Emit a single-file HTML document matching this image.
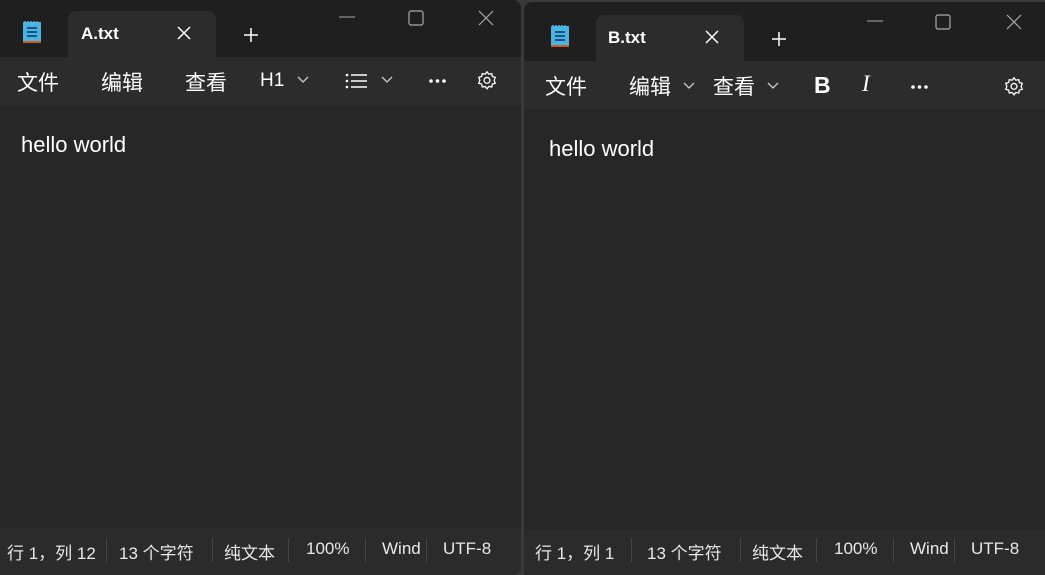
<!DOCTYPE html><html><head><meta charset="utf-8"><style>
*{margin:0;padding:0;box-sizing:border-box}
body{width:1045px;height:575px;background:#3a3a3a;position:relative;overflow:hidden;font-family:"Liberation Sans","Noto Sans CJK SC",sans-serif;color:#fff}
.win{position:absolute;background:#272727;overflow:hidden}
.title{position:absolute;left:0;top:0;right:0;background:#1f1f1f}
.tab{position:absolute;background:#2c2c2c;border-radius:8px 8px 0 0;font-weight:bold;font-size:17px}
.tb{position:absolute;left:0;right:0;background:#2c2c2c;font-size:21px}
.tb span{position:absolute;top:10px}
.st{position:absolute;left:0;right:0;bottom:0;height:47px;background:#2b2b2b;font-size:17px;color:#e8e8e8}
.st span{position:absolute;top:11px}
.st i{position:absolute;top:10px;width:1px;height:24px;background:#444}
.hw{position:absolute;font-size:22px}
svg{position:absolute}
</style></head><body>
<div class="win" style="left:0;top:0;width:521px;height:575px;border-radius:0 8px 8px 0">
 <div class="title" style="height:57px"></div>
 <svg style="left:22px;top:20px" width="20" height="25" viewBox="0 0 20 25"><rect x="1" y="2" width="18" height="21" fill="#4fb3e0"/><rect x="1" y="21" width="18" height="2" fill="#c8602a"/><path d="M5 8h10M5 12h10M5 16h10" stroke="#0b5a86" stroke-width="2"/><path d="M3 1v2M6 1v2M9 1v2M12 1v2M15 1v2" stroke="#4fb3e0" stroke-width="1.5"/></svg>
 <div class="tab" style="left:68px;top:11px;width:148px;height:46px"><span style="position:absolute;left:13px;top:13px">A.txt</span></div>
 <svg style="left:177px;top:26px" width="14" height="14"><path d="M1 1L13 13M13 1L1 13" stroke="#fff" stroke-width="1.5"/></svg>
 <svg style="left:243px;top:27px" width="16" height="16"><path d="M8 1v14M1 8h14" stroke="#fff" stroke-width="1.5"/></svg>
 <svg style="left:338px;top:10px" width="18" height="10"><path d="M1 7h16" stroke="#aaa"/></svg>
 <svg style="left:408px;top:10px" width="16" height="16"><rect x="1" y="1" width="14" height="14" rx="2" fill="none" stroke="#aaa" stroke-width="1.2"/></svg>
 <svg style="left:478px;top:10px" width="16" height="16"><path d="M1 1L15 15M15 1L1 15" stroke="#aaa" stroke-width="1.2"/></svg>
 <div class="tb" style="top:57px;height:48px">
  <span style="left:17px">文件</span><span style="left:101px">编辑</span><span style="left:185px">查看</span><span style="left:260px;font-size:19px;top:13px">H1</span>
  <svg style="left:297px;top:19px" width="12" height="8"><path d="M1 1l5 5 5-5" stroke="#ccc" fill="none" stroke-width="1.3"/></svg>
  <svg style="left:345px;top:15px" width="24" height="18"><path d="M6 3h16M6 9h16M6 15h16" stroke="#fff" stroke-width="1.5"/><circle cx="2" cy="3" r="1.3" fill="#fff"/><circle cx="2" cy="9" r="1.3" fill="#fff"/><circle cx="2" cy="15" r="1.3" fill="#fff"/></svg>
  <svg style="left:381px;top:19px" width="12" height="8"><path d="M1 1l5 5 5-5" stroke="#ccc" fill="none" stroke-width="1.3"/></svg>
  <svg style="left:428px;top:21px" width="20" height="6"><circle cx="3" cy="3" r="1.8" fill="#fff"/><circle cx="9.5" cy="3" r="1.8" fill="#fff"/><circle cx="16" cy="3" r="1.8" fill="#fff"/></svg>
  <svg style="left:476px;top:13px" width="22" height="22" viewBox="0 0 24 24"><path d="M12 2l2 2.5 3.2-.6.6 3.2L21 8l-1.2 3.3L21 14.5l-3.2.9-.6 3.2-3.2-.6L12 20.5 10 18l-3.2.6-.6-3.2L3 14.5l1.2-3.2L3 8l3.2-.9.6-3.2 3.2.6z" fill="none" stroke="#fff" stroke-width="1.4"/><circle cx="12" cy="11.3" r="3.2" fill="none" stroke="#fff" stroke-width="1.4"/></svg>
 </div>
 <div class="hw" style="left:21px;top:132px">hello world</div>
 <div class="st"><span style="left:7px">行 1，列 12</span><i style="left:106px"></i><span style="left:119px">13 个字符</span><i style="left:212px"></i><span style="left:224px">纯文本</span><i style="left:288px"></i><span style="left:306px">100%</span><i style="left:365px"></i><span style="left:382px">Wind</span><i style="left:426px"></i><span style="left:443px">UTF-8</span></div>
</div>
<div class="win" style="left:524px;top:2px;width:521px;height:573px;border-radius:8px 0 0 0">
 <div class="title" style="height:59px"></div>
 <svg style="left:26px;top:22px" width="20" height="25" viewBox="0 0 20 25"><rect x="1" y="2" width="18" height="21" fill="#4fb3e0"/><rect x="1" y="21" width="18" height="2" fill="#c8602a"/><path d="M5 8h10M5 12h10M5 16h10" stroke="#0b5a86" stroke-width="2"/><path d="M3 1v2M6 1v2M9 1v2M12 1v2M15 1v2" stroke="#4fb3e0" stroke-width="1.5"/></svg>
 <div class="tab" style="left:72px;top:13px;width:148px;height:46px"><span style="position:absolute;left:12px;top:13px">B.txt</span></div>
 <svg style="left:181px;top:28px" width="14" height="14"><path d="M1 1L13 13M13 1L1 13" stroke="#fff" stroke-width="1.5"/></svg>
 <svg style="left:247px;top:29px" width="16" height="16"><path d="M8 1v14M1 8h14" stroke="#fff" stroke-width="1.5"/></svg>
 <svg style="left:342px;top:12px" width="18" height="10"><path d="M1 7h16" stroke="#aaa"/></svg>
 <svg style="left:411px;top:12px" width="16" height="16"><rect x="1" y="1" width="14" height="14" rx="2" fill="none" stroke="#aaa" stroke-width="1.2"/></svg>
 <svg style="left:482px;top:12px" width="16" height="16"><path d="M1 1L15 15M15 1L1 15" stroke="#aaa" stroke-width="1.2"/></svg>
 <div class="tb" style="top:59px;height:48px">
  <span style="left:21px">文件</span><span style="left:105px">编辑</span><span style="left:189px">查看</span>
  <svg style="left:159px;top:21px" width="12" height="8"><path d="M1 1l5 5 5-5" stroke="#ccc" fill="none" stroke-width="1.3"/></svg>
  <svg style="left:243px;top:21px" width="12" height="8"><path d="M1 1l5 5 5-5" stroke="#ccc" fill="none" stroke-width="1.3"/></svg>
  <span style="left:290px;font-weight:bold;top:11px;font-size:23px">B</span>
  <span style="left:338px;font-style:italic;font-family:'Liberation Serif',serif;top:10px;font-size:23px">I</span>
  <svg style="left:386px;top:23px" width="20" height="6"><circle cx="3" cy="3" r="1.8" fill="#fff"/><circle cx="9.5" cy="3" r="1.8" fill="#fff"/><circle cx="16" cy="3" r="1.8" fill="#fff"/></svg>
  <svg style="left:479px;top:15px" width="22" height="22" viewBox="0 0 24 24"><path d="M12 2l2 2.5 3.2-.6.6 3.2L21 8l-1.2 3.3L21 14.5l-3.2.9-.6 3.2-3.2-.6L12 20.5 10 18l-3.2.6-.6-3.2L3 14.5l1.2-3.2L3 8l3.2-.9.6-3.2 3.2.6z" fill="none" stroke="#fff" stroke-width="1.4"/><circle cx="12" cy="11.3" r="3.2" fill="none" stroke="#fff" stroke-width="1.4"/></svg>
 </div>
 <div class="hw" style="left:25px;top:134px">hello world</div>
 <div class="st" style="height:45px"><span style="left:11px;top:9px">行 1，列 1</span><i style="left:107px;top:8px"></i><span style="left:123px;top:9px">13 个字符</span><i style="left:216px;top:8px"></i><span style="left:228px;top:9px">纯文本</span><i style="left:292px;top:8px"></i><span style="left:310px;top:9px">100%</span><i style="left:369px;top:8px"></i><span style="left:386px;top:9px">Wind</span><i style="left:430px;top:8px"></i><span style="left:447px;top:9px">UTF-8</span></div>
</div>
</body></html>
